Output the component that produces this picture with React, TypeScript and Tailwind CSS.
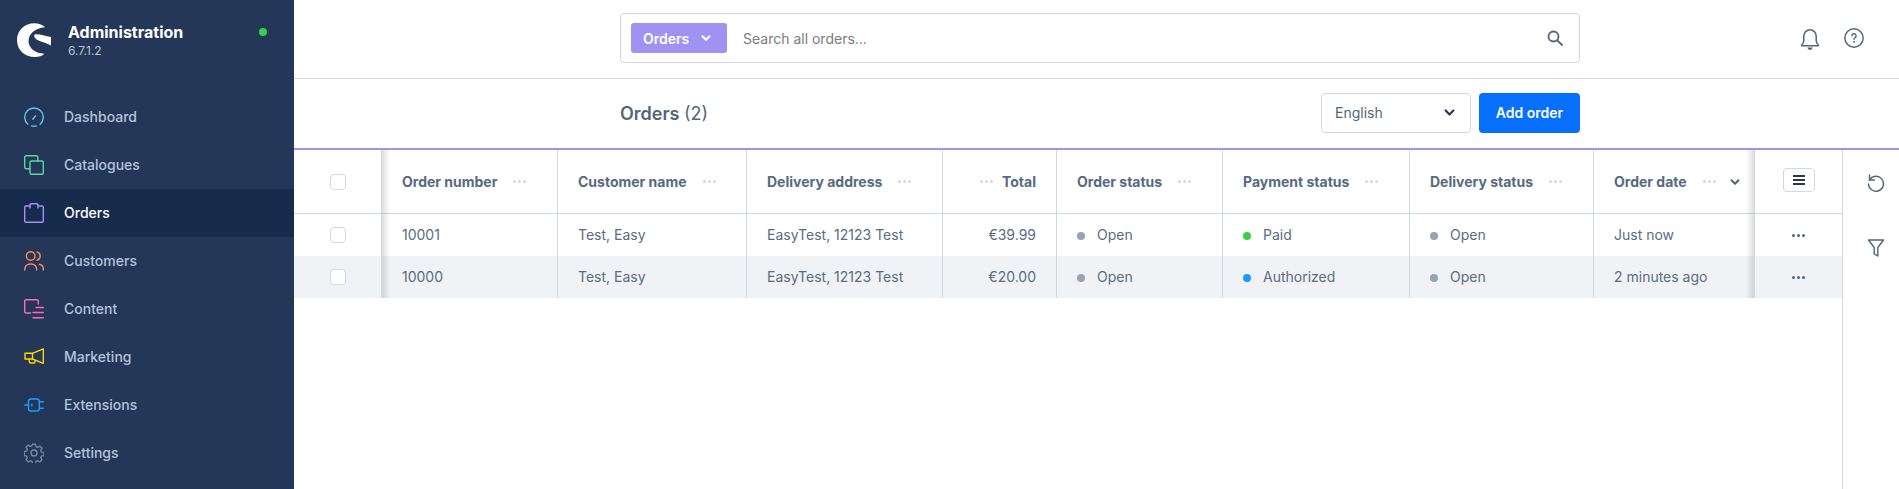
import React from "react";

const nav = [
  { label: "Dashboard", c: "#57c7e3", d: "dash" },
  { label: "Catalogues", c: "#57d9a3", d: "cat" },
  { label: "Orders", c: "#a092f0", d: "ord", active: true },
  { label: "Customers", c: "#ff8a5c", d: "cust" },
  { label: "Content", c: "#ff68b4", d: "cont" },
  { label: "Marketing", c: "#ffd700", d: "mark" },
  { label: "Extensions", c: "#189eff", d: "ext" },
  { label: "Settings", c: "#758ca3", d: "set" },
];

function NavIcon({ d, c }: { d: string; c: string }) {
  const p = { fill: "none", stroke: c, strokeWidth: 1.4, strokeLinecap: "round" as const, strokeLinejoin: "round" as const };
  return (
    <svg width="20" height="20" viewBox="0 0 20 20" className="shrink-0">
      {d === "dash" && (
        <g {...p}>
          <path d="M3.800 17.200A9.300 9.300 0 1 1 16.200 17.200" />
          <path d="M7.500 18.900a9.300 9.300 0 0 0 5 0" />
          <path d="M8.800 12.300l2.800-3.600" />
        </g>
      )}
      {d === "cat" && (
        <g {...p}>
          <path d="M6 13.800H2.200a1.500 1.500 0 0 1-1.500-1.500V2.200A1.500 1.500 0 0 1 2.200.7h10.100a1.500 1.500 0 0 1 1.500 1.500V6" />
          <rect x="6" y="6" width="13.300" height="13.300" rx="1.500" />
        </g>
      )}
      {d === "ord" && (
        <g {...p}>
          <path d="M6 3H2a1.300 1.300 0 0 0-1.300 1.300V18a1.300 1.300 0 0 0 1.300 1.300H18a1.300 1.300 0 0 0 1.300-1.300V4.300A1.300 1.300 0 0 0 18 3H14" />
          <path d="M6 5V1.700a1 1 0 0 1 1-1h6a1 1 0 0 1 1 1V5" />
        </g>
      )}
      {d === "cust" && (
        <g {...p}>
          <circle cx="6.700" cy="5" r="4.300" />
          <path d="M.7 19v-.5a5.500 5.500 0 0 1 5.500-5.500h1a5.500 5.500 0 0 1 5.500 5.500v.5" />
          <path d="M13 .9a4.300 4.300 0 0 1 0 8.300" />
          <path d="M15.500 13.300a5 5 0 0 1 3.800 5V19" />
        </g>
      )}
      {d === "cont" && (
        <g {...p}>
          <path d="M6.700 14H2a1.300 1.300 0 0 1-1.300-1.300V2A1.300 1.300 0 0 1 2 .7h11a1.300 1.300 0 0 1 1.300 1.300V5" />
          <path d="M12 8.500h7.300M9 13.500h10.300M9 18.700h10.300" />
        </g>
      )}
      {d === "mark" && (
        <g {...p}>
          <path d="M8.500 6.300 19.300 1.800v14.500L8.500 12z" />
          <path d="M8.500 6.300H1v5.700h7.500" />
          <path d="M5 12l.5 3a1.300 1.300 0 0 0 1.300 1h3.200c.8 0 1-.7 1-1.800" />
        </g>
      )}
      {d === "ext" && (
        <g {...p}>
          <rect x="4.500" y="4" width="10.800" height="12" rx="2.500" />
          <path d="M.7 10h3.800M15.300 6.700h4M15.300 13.300h4M7.800 9.300v1.500" />
        </g>
      )}
      {d === "set" && (
        <g {...p}>
          <circle cx="10" cy="10" r="3" />
          <path d="M8.400.8h3.200l.5 2.500 1.800.8 2.200-1.400 2.300 2.300-1.400 2.200.8 1.800 2.500.5v3.200l-2.500.5-.8 1.800 1.400 2.200-2.300 2.300-2.200-1.400-1.800.8-.5 2.500H8.400l-.5-2.500-1.800-.8-2.200 1.400-2.300-2.300 1.400-2.200-.8-1.800-2.500-.5V8.400l2.500-.5.8-1.800-1.400-2.200 2.300-2.300 2.200 1.400 1.800-.8z" transform="translate(10 10) scale(.95) translate(-10 -10)" />
        </g>
      )}
    </svg>
  );
}

function Dots({ cls = "bg-[#d1d9e0]" }: { cls?: string }) {
  return (
    <span className="flex gap-[2px] shrink-0">
      <i className={`block w-[3px] h-[3px] rounded-full ${cls}`} />
      <i className={`block w-[3px] h-[3px] rounded-full ${cls}`} />
      <i className={`block w-[3px] h-[3px] rounded-full ${cls}`} />
    </span>
  );
}

function Check() {
  return <span className="block w-4 h-4 rounded-[4px] border border-[#d1d9e0] bg-white" />;
}

function Chevron({ color, size = 10, w = 2 }: { color: string; size?: number; w?: number }) {
  return (
    <svg width={size} height={size} viewBox="0 0 10 10" className="shrink-0">
      <path d="M1.500 3.200 5 6.800 8.500 3.200" fill="none" stroke={color} strokeWidth={w} strokeLinecap="round" strokeLinejoin="round" />
    </svg>
  );
}

function StatusCell({ color, text }: { color: string; text: string }) {
  return (
    <span className="flex items-center gap-3">
      <i className={`block w-2 h-2 rounded-full mt-[3px] ${color}`} />
      {text}
    </span>
  );
}

const cellB = "border-r border-[#d1d9e0] flex items-center px-5 min-w-0 whitespace-nowrap";
const rowText = "text-[#5a6d81] pb-[1px]";

function HeadB({ label, sort }: { label: string; sort?: boolean }) {
  return (
    <div className={`${cellB} border-b gap-4 font-bold text-[#566a7e]`}>
      <span>{label}</span>
      <Dots />
      {sort && <span className="-ml-[2px]"><Chevron color="#52667a" /></span>}
    </div>
  );
}

const rows = [
  { n: "10001", t: "€39.99", pc: "bg-[#37d046]", p: "Paid", d: "Just now", bg: "bg-white" },
  { n: "10000", t: "€20.00", pc: "bg-[#189eff]", p: "Authorized", d: "2 minutes ago", bg: "bg-[#f0f2f5]" },
];

export default function App() {
  return (
    <div className="flex w-[1899px] h-[489px] overflow-hidden bg-white font-['Inter',sans-serif] text-[14px] text-[#52667a]">
      <aside className="w-[294px] shrink-0 bg-[#243758] flex flex-col">
        <div className="h-[93px] shrink-0 flex pl-[17px] pr-[27px] pt-[23px]">
          <svg width="34" height="34" viewBox="0 0 34 34" className="shrink-0">
            <path d="M17.500.2C7.500.2 0 7.500 0 17c0 10 7.500 17 18 17 3.800 0 7.300-1 9.300-3.300-4-.4-9.500-1.300-13-5.500-3-3.500-3.500-8.500-1.500-12.500C15.500 8 20.500 4.800 28.300 4.200 25 1.500 21.500.2 17.500.2z" fill="#fff" />
            <path d="M17.800 11.500c3.500-1 10 1.500 16.200 2.500v8.500c-4.500-2.500-8-3.300-12.500-5-3-1.100-5.500-4.800-3.700-6z" fill="#fff" />
          </svg>
          <div className="ml-[17px] flex-1 flex flex-col">
            <span className="text-white font-bold text-[16px] leading-[20px] mt-[-1px]">Administration</span>
            <span className="text-[#b6c4d6] text-[12px] leading-[15px] mt-[1px]">6.7.1.2</span>
          </div>
          <i className="block w-2 h-2 rounded-full bg-[#37d046] mt-[5px]" />
        </div>
        <nav className="flex flex-col">
          {nav.map((n) => (
            <div key={n.label} className={`h-12 flex items-center pl-6 pb-[1px] gap-5 font-medium ${n.active ? "bg-[#172b4d] text-white" : "text-[#b3c3d9]"}`}>
              <NavIcon d={n.d} c={n.c} />
              {n.label}
            </div>
          ))}
        </nav>
      </aside>

      <main className="flex-1 min-w-0 flex flex-col">
        <header className="h-[79px] shrink-0 border-b border-[#d1d9e0] flex items-center pl-[326px] pb-[2px]">
          <div className="w-[960px] h-[50px] rounded-[4px] border border-[#d1d9e0] flex items-center pl-[10px] pr-[16px]">
            <div className="w-[96px] h-[30px] rounded-[3px] bg-[#a092f0] text-white font-semibold flex items-center pl-3 gap-3">
              Orders <Chevron color="#fff" size={10} />
            </div>
            <span className="ml-4 flex-1 text-[#7c7c7c]">Search all orders...</span>
            <svg width="16" height="16" viewBox="0 0 16 16">
              <circle cx="6.500" cy="6.500" r="5" fill="none" stroke="#52667a" strokeWidth="1.800" />
              <path d="M10.300 10.300 15 15" stroke="#52667a" strokeWidth="1.800" strokeLinecap="round" />
            </svg>
          </div>
          <svg width="20" height="22" viewBox="0 0 20 22" className="ml-[220px] mt-[1px]">
            <path d="M2 16.500c1.300-1 1.800-2.200 1.800-4V8a6.200 6.200 0 0 1 12.400 0v4.500c0 1.800.5 3 1.800 4 .7.600.3 1.300-.5 1.300H2.500c-.8 0-1.200-.7-.5-1.300z" fill="none" stroke="#52667a" strokeWidth="1.500" strokeLinejoin="round" />
            <path d="M8 19.500a2 2 0 0 0 4 0" fill="#52667a" stroke="#52667a" strokeWidth="1" />
          </svg>
          <svg width="20" height="20" viewBox="0 0 19 19" className="ml-[24px]">
            <circle cx="9.500" cy="9.500" r="8.700" fill="none" stroke="#52667a" strokeWidth="1.400" />
            <path d="M7.500 7.500a2 2 0 1 1 3 1.700c-.7.400-1 .8-1 1.500" fill="none" stroke="#52667a" strokeWidth="1.300" strokeLinecap="round" />
            <circle cx="9.500" cy="13" r=".9" fill="#52667a" />
          </svg>
        </header>

        <div className="h-[69px] shrink-0 flex items-center pl-[326px] pb-[2px]">
          <h1 className="text-[18px] font-semibold pt-[2px]">Orders <span className="font-normal">(2)</span></h1>
          <div className="ml-auto mr-[319px] flex gap-2">
            <div className="w-[150px] h-10 rounded-[4px] border border-[#d1d9e0] flex items-center justify-between pl-[13px] pr-[15px]">
              English <Chevron color="#2b3a4a" size={11} />
            </div>
            <div className="w-[101px] h-10 rounded-[4px] bg-[#0870ff] text-white font-semibold flex items-center justify-center">Add order</div>
          </div>
        </div>

        <div className="h-[2px] shrink-0 bg-[#a092f0]" />

        <div className="flex-1 flex min-h-0">
          <div className="w-[1548px] shrink-0 relative self-start">
            <div className="grid grid-cols-[88px_176px_189px_196px_114px_166px_187px_184px_161px_87px] grid-rows-[64px_42px_42px]">
              <div className="border-r border-b border-[#d1d9e0] flex items-center justify-center"><Check /></div>
              <HeadB label="Order number" />
              <HeadB label="Customer name" />
              <HeadB label="Delivery address" />
              <div className={`${cellB} border-b justify-end gap-[9px] font-bold text-[#566a7e]`}><Dots /><span>Total</span></div>
              <HeadB label="Order status" />
              <HeadB label="Payment status" />
              <HeadB label="Delivery status" />
              <HeadB label="Order date" sort />
              <div className="border-b border-[#d1d9e0] flex items-center justify-center pb-[3px]">
                <div className="w-8 h-6 rounded-[4px] border border-[#d1d9e0] flex flex-col items-center justify-center gap-[2px]">
                  <i className="block w-3 h-[2px] bg-[#2b3a4a]" />
                  <i className="block w-3 h-[2px] bg-[#2b3a4a]" />
                  <i className="block w-3 h-[2px] bg-[#2b3a4a]" />
                </div>
              </div>
              {rows.map((r) => (
                <div key={r.n} className="contents">
                  <div className={`${r.bg} border-r border-[#d1d9e0] flex items-center justify-center`}><Check /></div>
                  <div className={`${r.bg} ${cellB} ${rowText}`}>{r.n}</div>
                  <div className={`${r.bg} ${cellB} ${rowText}`}>Test, Easy</div>
                  <div className={`${r.bg} ${cellB} ${rowText}`}>EasyTest, 12123 Test</div>
                  <div className={`${r.bg} ${cellB} ${rowText} justify-end`}>{r.t}</div>
                  <div className={`${r.bg} ${cellB} ${rowText}`}><StatusCell color="bg-[#94a3b5]" text="Open" /></div>
                  <div className={`${r.bg} ${cellB} ${rowText}`}><StatusCell color={r.pc} text={r.p} /></div>
                  <div className={`${r.bg} ${cellB} ${rowText}`}><StatusCell color="bg-[#94a3b5]" text="Open" /></div>
                  <div className={`${r.bg} ${cellB} ${rowText}`}>{r.d}</div>
                  <div className={`${r.bg} flex items-center justify-center`}><Dots cls="bg-[#52667a]" /></div>
                </div>
              ))}
            </div>
            <div className="absolute top-0 bottom-0 left-[88px] w-2 bg-gradient-to-r from-[#00000020] to-transparent" />
            <div className="absolute top-0 bottom-0 right-[88px] w-2 bg-gradient-to-l from-[#00000020] to-transparent" />
          </div>
          <div className="flex-1 border-l border-[#d1d9e0] flex flex-col items-center pl-[9px] pt-[23px] gap-[45px]">
            <svg width="18" height="20" viewBox="0 0 18 20">
              <path d="M2.500 2v5h5" fill="none" stroke="#52667a" strokeWidth="1.400" strokeLinecap="round" strokeLinejoin="round" />
              <path d="M2.500 7A7.500 7.500 0 1 1 1.500 11" fill="none" stroke="#52667a" strokeWidth="1.400" strokeLinecap="round" />
            </svg>
            <svg width="18" height="20" viewBox="0 0 18 20">
              <path d="M1.500 2h15L10.800 9.500V18l-3.600-2.200V9.500z" fill="none" stroke="#52667a" strokeWidth="1.400" strokeLinejoin="round" />
            </svg>
          </div>
        </div>
      </main>
    </div>
  );
}
